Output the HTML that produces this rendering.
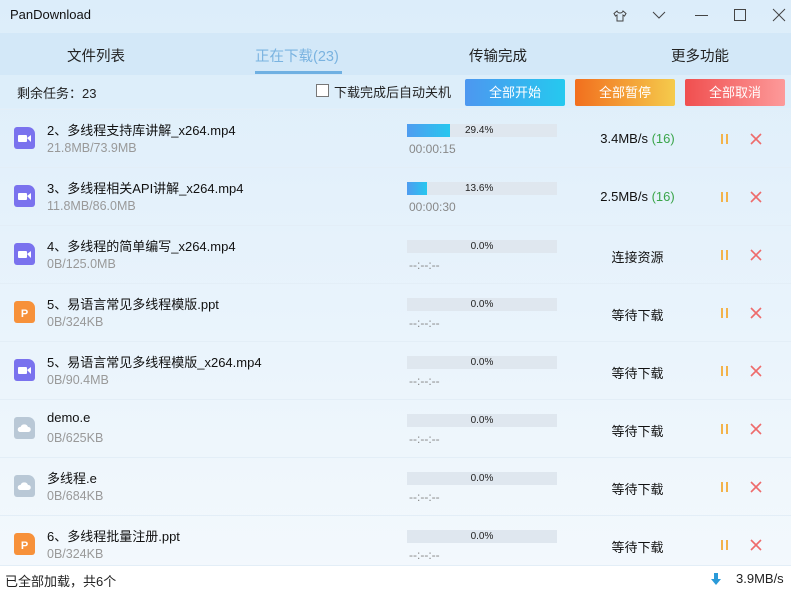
<!DOCTYPE html><html><head><meta charset="utf-8"><style>
*{margin:0;padding:0;box-sizing:border-box}
body{width:791px;height:594px;overflow:hidden;font-family:"Liberation Sans","Noto Sans CJK SC",sans-serif;background:linear-gradient(#dcedfa,#f4f9fd);position:relative;color:#222}
.abs{position:absolute}
.title{left:10px;top:7px;font-size:13px;color:#111}
.tabs{left:0;top:33px;width:791px;height:42px;background:#d3e8f8}
.tab{position:absolute;top:13px;font-size:14.5px;color:#222}
.tb{left:0;top:75px;width:791px;height:33px;background:#ddeefa}
.btn{position:absolute;top:79px;width:100px;height:27px;border-radius:2px;color:#fff;font-size:13px;text-align:center;line-height:27px}
.row{position:absolute;left:0;width:791px;height:58px;border-top:1px solid #e3eef7}
.ic{position:absolute;left:14px;top:17px;width:21px;height:22px;border-radius:3px;border-top-right-radius:7px}
.ic svg{position:absolute;left:0;top:0}
.nm{position:absolute;left:47px;top:10px;font-size:13px;color:#111}
.sz{position:absolute;left:47px;top:31px;font-size:12.5px;color:#999}
.bar{position:absolute;left:407px;top:14px;width:150px;height:13px;background:#dfe7ef}
.fill{position:absolute;left:0;top:0;height:13px;background:linear-gradient(90deg,#4f9cf0,#27c7ef)}
.pct{position:absolute;left:0;width:150px;top:0;text-align:center;font-size:10px;line-height:13px;color:#222}
.pct.l{left:58px;text-align:left}
.tm{position:absolute;left:409px;top:32px;font-size:12px;color:#888}
.st{position:absolute;left:560px;width:155px;text-align:center;top:21px;font-size:13px;color:#111}
.pa{position:absolute;left:721px;top:24px;width:7px;height:10px;border-left:2px solid #f3b34a;border-right:2px solid #f3b34a}
.x{position:absolute;left:750px;top:23px}
</style></head><body>
<div class="abs title">PanDownload</div>
<svg class="abs" style="left:612px;top:8px" width="16" height="16" viewBox="0 0 16 16" fill="none" stroke="#444" stroke-width="1"><path d="M5 3L2 5.5 3.5 8 5 7v6h6V7l1.5 1L14 5.5 11 3c-.5 1.5-1.5 2-3 2S5.5 4.5 5 3z"/></svg>
<svg class="abs" style="left:652px;top:9px" width="14" height="12" fill="none" stroke="#444" stroke-width="1"><path d="M1 3l6 6 6-6"/></svg>
<div class="abs" style="left:695px;top:15px;width:13px;height:1px;background:#444"></div>
<div class="abs" style="left:734px;top:9px;width:12px;height:12px;border:1px solid #444"></div>
<svg class="abs" style="left:772px;top:8px" width="14" height="14" stroke="#444" stroke-width="1"><path d="M1 1l12 12M13 1L1 13"/></svg>
<div class="abs tabs"></div>
<div class="tab" style="left:67px;top:45px">文件列表</div>
<div class="tab" style="left:255px;top:45px;color:#7ab3e0">正在下载(23)</div>
<div class="abs" style="left:255px;top:71px;width:87px;height:3px;background:#6fb0e2"></div>
<div class="tab" style="left:469px;top:45px">传输完成</div>
<div class="tab" style="left:671px;top:45px">更多功能</div>
<div class="abs tb"></div>
<div class="abs" style="left:17px;top:83px;font-size:13px">剩余任务：23</div>
<div class="abs" style="left:316px;top:84px;width:13px;height:13px;border:1px solid #777;background:#fff"></div>
<div class="abs" style="left:334px;top:82px;font-size:13px">下载完成后自动关机</div>
<div class="btn" style="left:465px;background:linear-gradient(90deg,#4d97f0,#25c9ef)">全部开始</div>
<div class="btn" style="left:575px;background:linear-gradient(90deg,#f26f1e,#f5cb4c)">全部暂停</div>
<div class="btn" style="left:685px;background:linear-gradient(90deg,#f04f4f,#fd9a9a)">全部取消</div>
<svg width="0" height="0" style="position:absolute"><defs>
<symbol id="v" viewBox="0 0 21 22"><rect x="4" y="8" width="9" height="7" rx="1" fill="#fff"/><path d="M13 11l4-3v7z" fill="#fff"/></symbol>
<symbol id="p" viewBox="0 0 21 22"><text x="10.5" y="16" font-size="11" font-weight="bold" fill="#fff" text-anchor="middle" font-family="Liberation Sans">P</text></symbol>
<symbol id="c" viewBox="0 0 21 22"><path d="M6 15a2.5 2.5 0 0 1 .5-5 4 4 0 0 1 7.5 0 2.5 2.5 0 0 1 .5 5z" fill="#fff"/></symbol>
<symbol id="x" viewBox="0 0 12 12"><path d="M1 1l10 10M11 1L1 11" stroke="#ee6b6b" stroke-width="1.6"/></symbol>
</defs></svg>

<div class="row" style="top:109px"><div class="ic" style="background:#7a72ee"><svg width="21" height="22"><use href="#v"/></svg></div><div class="nm">2、多线程支持库讲解_x264.mp4</div><div class="sz">21.8MB/73.9MB</div><div class="bar"><div class="fill" style="width:43px"></div><div class="pct l">29.4%</div></div><div class="tm">00:00:15</div><div class="st">3.4MB/s <span style="color:#3aa54a">(16)</span></div><div class="pa"></div><svg class="x" width="12" height="12"><use href="#x"/></svg></div>
<div class="row" style="top:167px"><div class="ic" style="background:#7a72ee"><svg width="21" height="22"><use href="#v"/></svg></div><div class="nm">3、多线程相关API讲解_x264.mp4</div><div class="sz">11.8MB/86.0MB</div><div class="bar"><div class="fill" style="width:20px"></div><div class="pct l">13.6%</div></div><div class="tm">00:00:30</div><div class="st">2.5MB/s <span style="color:#3aa54a">(16)</span></div><div class="pa"></div><svg class="x" width="12" height="12"><use href="#x"/></svg></div>
<div class="row" style="top:225px"><div class="ic" style="background:#7a72ee"><svg width="21" height="22"><use href="#v"/></svg></div><div class="nm">4、多线程的简单编写_x264.mp4</div><div class="sz">0B/125.0MB</div><div class="bar"><div class="pct">0.0%</div></div><div class="tm">--:--:--</div><div class="st">连接资源</div><div class="pa"></div><svg class="x" width="12" height="12"><use href="#x"/></svg></div>
<div class="row" style="top:283px"><div class="ic" style="background:#f7913a"><svg width="21" height="22"><use href="#p"/></svg></div><div class="nm">5、易语言常见多线程模版.ppt</div><div class="sz">0B/324KB</div><div class="bar"><div class="pct">0.0%</div></div><div class="tm">--:--:--</div><div class="st">等待下载</div><div class="pa"></div><svg class="x" width="12" height="12"><use href="#x"/></svg></div>
<div class="row" style="top:341px"><div class="ic" style="background:#7a72ee"><svg width="21" height="22"><use href="#v"/></svg></div><div class="nm">5、易语言常见多线程模版_x264.mp4</div><div class="sz">0B/90.4MB</div><div class="bar"><div class="pct">0.0%</div></div><div class="tm">--:--:--</div><div class="st">等待下载</div><div class="pa"></div><svg class="x" width="12" height="12"><use href="#x"/></svg></div>
<div class="row" style="top:399px"><div class="ic" style="background:#b9c8d6"><svg width="21" height="22"><use href="#c"/></svg></div><div class="nm">demo.e</div><div class="sz">0B/625KB</div><div class="bar"><div class="pct">0.0%</div></div><div class="tm">--:--:--</div><div class="st">等待下载</div><div class="pa"></div><svg class="x" width="12" height="12"><use href="#x"/></svg></div>
<div class="row" style="top:457px"><div class="ic" style="background:#b9c8d6"><svg width="21" height="22"><use href="#c"/></svg></div><div class="nm">多线程.e</div><div class="sz">0B/684KB</div><div class="bar"><div class="pct">0.0%</div></div><div class="tm">--:--:--</div><div class="st">等待下载</div><div class="pa"></div><svg class="x" width="12" height="12"><use href="#x"/></svg></div>
<div class="row" style="top:515px"><div class="ic" style="background:#f7913a"><svg width="21" height="22"><use href="#p"/></svg></div><div class="nm">6、多线程批量注册.ppt</div><div class="sz">0B/324KB</div><div class="bar"><div class="pct">0.0%</div></div><div class="tm">--:--:--</div><div class="st">等待下载</div><div class="pa"></div><svg class="x" width="12" height="12"><use href="#x"/></svg></div>
<div class="abs" style="left:0;top:565px;width:791px;height:29px;background:#fff;border-top:1px solid #e3eef7"></div>
<div class="abs" style="left:5px;top:571px;font-size:13px">已全部加载，共6个</div>
<svg class="abs" style="left:711px;top:573px" width="10" height="13"><path d="M3 0h4v6h3L5 12 0 6h3z" fill="#2a9ad8"/></svg>
<div class="abs" style="left:736px;top:571px;font-size:13px">3.9MB/s</div>
</body></html>
